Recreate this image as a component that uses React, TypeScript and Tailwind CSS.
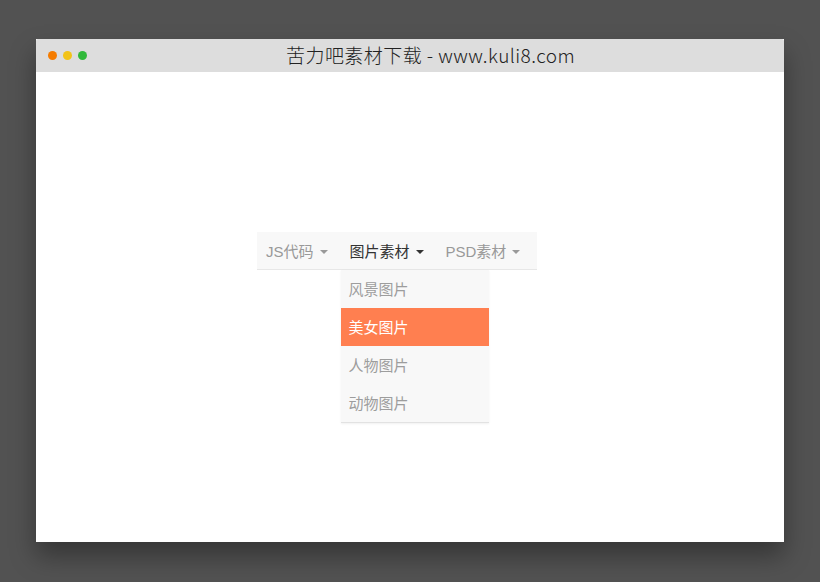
import { useState } from 'react'

const menu = [
  { label: 'JS代码', caret: 'text-[#999]' },
  { label: '图片素材', caret: 'text-[#333]', open: true },
  { label: 'PSD素材', caret: 'text-[#999]' },
]

const subItems = ['风景图片', '美女图片', '人物图片', '动物图片']

function Caret({ className }: { className: string }) {
  return (
    <svg width="8" height="4" viewBox="0 0 8 4" className={className}>
      <path d="M0 0h8L4 4z" fill="currentColor" />
    </svg>
  )
}

export default function App() {
  const [active, setActive] = useState(1)

  return (
    <div className="w-[820px] h-[582px] bg-[#525252] pt-[39px] pl-[36px] font-['Liberation_Sans','Noto_Sans_CJK_SC',sans-serif]">
      <div className="w-[748px] h-[503px] bg-white flex flex-col shadow-[0_14px_24px_rgba(0,0,0,0.35)]">
        {/* Title bar */}
        <div className="h-[33px] bg-[#dddddd] flex items-center rounded-t-[2px]">
          <div className="flex items-center gap-[6px] pl-[12px] w-[70px]">
            <span className="w-[9px] h-[9px] rounded-full bg-[#f57c00]" />
            <span className="w-[9px] h-[9px] rounded-full bg-[#f2c318]" />
            <span className="w-[9px] h-[9px] rounded-full bg-[#31b93b]" />
          </div>
          <div className="flex-1 pl-[180px] text-[19px] text-[#222] font-['Noto_Sans_CJK_SC',sans-serif] font-light tracking-[0.45px]">
            苦力吧素材下载 - www.kuli8.com
          </div>
        </div>

        {/* Content */}
        <div className="flex-1 flex pt-[160px] pl-[221px]">
          <ul className="flex w-[280px] h-[38px] bg-[#f8f8f8] border-b border-[#e7e7e7] text-[15px]">
            {menu.map((m) => (
              <li key={m.label} className="relative">
                <div
                  className={`h-[37px] flex items-center gap-[6px] pt-[3px] pl-[9px] pr-[13px] ${
                    m.open ? 'text-[#333]' : 'text-[#999]'
                  }`}
                >
                  <span>{m.label}</span>
                  <Caret className={m.caret} />
                </div>
                {m.open && (
                  <ul className="absolute left-0 top-[38px] w-[148px] bg-[#f8f8f8] border-b border-[#e2e2e2] shadow-[0_1px_2px_rgba(0,0,0,0.06)]">
                    {subItems.map((s, i) => (
                      <li
                        key={s}
                        onMouseEnter={() => setActive(i)}
                        className={`h-[38px] flex items-center pt-[2px] pl-[8px] text-[15px] ${
                          i === active ? 'bg-[#ff7f50] text-white' : 'text-[#9d9d9d]'
                        }`}
                      >
                        {s}
                      </li>
                    ))}
                  </ul>
                )}
              </li>
            ))}
          </ul>
        </div>
      </div>
    </div>
  )
}
